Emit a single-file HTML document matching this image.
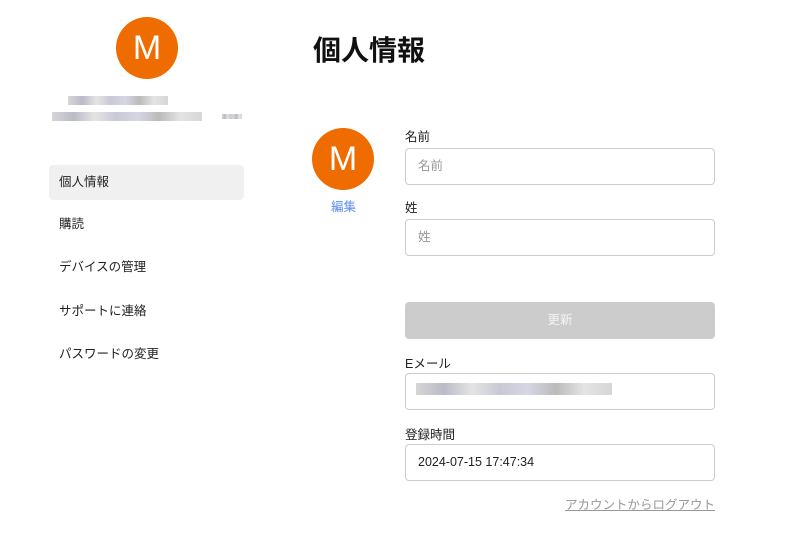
<!DOCTYPE html>
<html><head><meta charset="utf-8"><style>
*{margin:0;padding:0;box-sizing:border-box}
body{width:800px;height:542px;background:#fff;font-family:"Liberation Sans","Noto Sans CJK JP",sans-serif;color:#222;position:relative;overflow:hidden;font-size:12.5px}
.av{position:absolute;width:62px;height:62px;border-radius:50%;background:#ef6c00;color:#fff;font-size:34px;display:flex;align-items:center;justify-content:center}
.abs{position:absolute}
.nav{position:absolute;left:49px;width:195px;height:35px;line-height:35px;padding-left:10px;font-size:12.5px;border-radius:4px}
.lbl{position:absolute;left:405px;font-size:12.5px}
.inp{position:absolute;left:405px;width:310px;height:37px;border:1px solid #ccc;border-radius:4px;padding-left:12px;line-height:35px;font-size:12.5px;color:#999}
.blur{position:absolute;height:7px;background:linear-gradient(90deg,#ccc,#aab,#ddd,#bbc,#ccd,#aaa,#ddd,#ccc);opacity:.8}
</style></head><body>
<div class="av" style="left:116px;top:17px">M</div>
<div class="blur" style="left:68px;top:96px;width:100px;height:9px"></div>
<div class="blur" style="left:52px;top:112px;width:150px;height:9px"></div>
<div class="blur" style="left:222px;top:114px;width:20px;height:5px"></div>
<div class="nav" style="top:165px;background:#f0f0f0">個人情報</div>
<div class="nav" style="top:207px">購読</div>
<div class="nav" style="top:250px">デバイスの管理</div>
<div class="nav" style="top:294px">サポートに連絡</div>
<div class="nav" style="top:337px">パスワードの変更</div>
<div class="abs" style="left:313px;top:29px;font-size:28px;font-weight:bold;color:#111">個人情報</div>
<div class="av" style="left:312px;top:128px">M</div>
<div class="abs" style="left:331px;top:196px;color:#5b8def">編集</div>
<div class="lbl" style="top:126px">名前</div>
<div class="inp" style="top:148px">名前</div>
<div class="lbl" style="top:197px">姓</div>
<div class="inp" style="top:219px">姓</div>
<div class="abs" style="left:405px;top:302px;width:310px;height:37px;background:#ccc;border-radius:4px;color:#f4f4f4;text-align:center;line-height:37px">更新</div>
<div class="lbl" style="top:353px">Eメール</div>
<div class="inp" style="top:373px"></div>
<div class="blur" style="left:416px;top:383px;width:196px;height:12px"></div>
<div class="lbl" style="top:424px">登録時間</div>
<div class="inp" style="top:444px;color:#222">2024-07-15 17:47:34</div>
<div class="abs" style="right:85px;top:494px;color:#999;text-decoration:underline">アカウントからログアウト</div>
</body></html>
